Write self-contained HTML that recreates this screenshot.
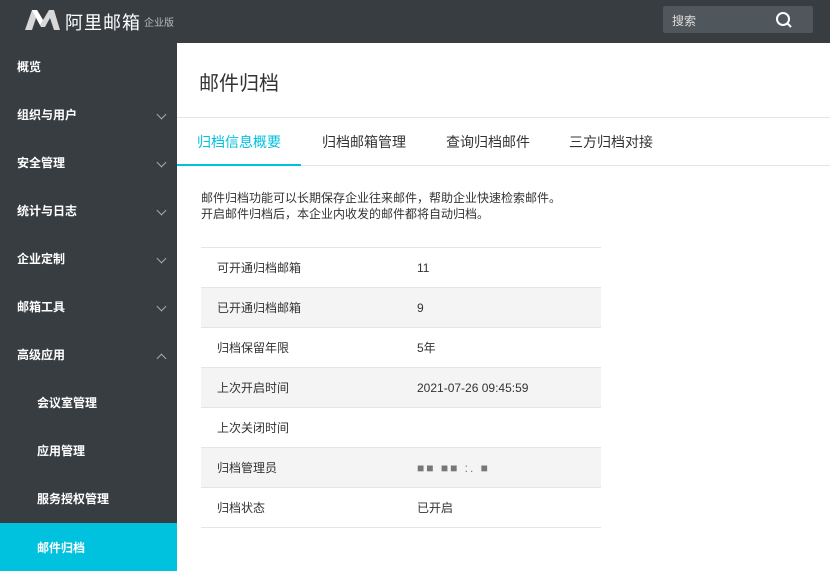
<!DOCTYPE html><html><head><meta charset="utf-8"><style>
*{margin:0;padding:0;box-sizing:border-box}
body{width:830px;height:559px;overflow:hidden;font-family:"Liberation Sans","Noto Sans CJK SC",sans-serif;background:#fff;position:relative}
.top{position:absolute;left:0;top:0;width:830px;height:43px;background:#373d41}
.side{position:absolute;left:0;top:43px;width:177px;height:516px;background:#373d41}
.it{height:48px;line-height:48px;color:#fff;font-size:12px;font-weight:bold;padding-left:17px;position:relative}
.it.sub{padding-left:37px}
.it.act{background:#00c1de}
.chev{position:absolute;right:12px;top:20px;width:7px;height:7px;border-right:1px solid #aaa;border-bottom:1px solid #aaa;transform:rotate(45deg)}
.chev.up{transform:rotate(-135deg);top:24px}
.main{position:absolute;left:177px;top:43px;width:653px;height:516px}
h1{position:absolute;left:22px;top:24px;font-size:20px;font-weight:normal;color:#333}
.tabs{position:absolute;left:0;top:74px;width:653px;height:49px;border-top:1px solid #e5e5e5;border-bottom:1px solid #e5e5e5}
.tab{position:absolute;top:0;height:48px;line-height:48px;font-size:14px;color:#333}
.tab.on{color:#00c1de;border-bottom:2px solid #00c1de;left:0;width:124px;text-align:center}
.desc{position:absolute;left:24px;top:147px;font-size:12px;line-height:16px;color:#333}
table{position:absolute;left:24px;top:204px;width:400px;border-collapse:collapse;font-size:12px;color:#333}
td{height:40px;border-top:1px solid #e5e5e5;border-bottom:1px solid #e5e5e5}
td:first-child{padding-left:16px;width:216px}
tr:nth-child(even) td{background:#f4f4f4}
</style></head><body>
<div class="top">
<svg style="position:absolute;left:25px;top:9px" width="35" height="22" viewBox="0 0 35 22"><path d="M0 21L7 1h5l6 10 6-10h5l6 20h-6l-4-12-5 9h-4l-5-9-4 12z" fill="#d8d8d8"/><path d="M7 1h5l6 10-3 5z" fill="#fff"/></svg>
<span style="position:absolute;left:65px;top:9px;color:#fff;font-size:18px;letter-spacing:1px">阿里邮箱</span>
<span style="position:absolute;left:144px;top:14px;color:#bbb;font-size:10px">企业版</span>
<div style="position:absolute;left:663px;top:6px;width:150px;height:27px;background:#4f565c;border-radius:2px"><span style="position:absolute;left:9px;top:6px;color:#ddd;font-size:12px">搜索</span>
<svg style="position:absolute;left:112px;top:5px" width="18" height="18" viewBox="0 0 18 18"><circle cx="8" cy="8" r="6" fill="none" stroke="#fff" stroke-width="2"/><path d="M12.5 12.5L16 16" stroke="#fff" stroke-width="2"/></svg></div>
</div>
<div class="side">
<div class="it">概览</div>
<div class="it">组织与用户<i class="chev"></i></div>
<div class="it">安全管理<i class="chev"></i></div>
<div class="it">统计与日志<i class="chev"></i></div>
<div class="it">企业定制<i class="chev"></i></div>
<div class="it">邮箱工具<i class="chev"></i></div>
<div class="it">高级应用<i class="chev up"></i></div>
<div class="it sub">会议室管理</div>
<div class="it sub">应用管理</div>
<div class="it sub">服务授权管理</div>
<div class="it sub act" style="line-height:46px;padding-top:2px">邮件归档</div>
</div>
<div class="main">
<h1>邮件归档</h1>
<div class="tabs">
<div class="tab on">归档信息概要</div>
<div class="tab" style="left:145px">归档邮箱管理</div>
<div class="tab" style="left:269px">查询归档邮件</div>
<div class="tab" style="left:392px">三方归档对接</div>
</div>
<div class="desc">邮件归档功能可以长期保存企业往来邮件，帮助企业快速检索邮件。<br>开启邮件归档后，本企业内收发的邮件都将自动归档。</div>
<table>
<tr><td>可开通归档邮箱</td><td>11</td></tr>
<tr><td>已开通归档邮箱</td><td>9</td></tr>
<tr><td>归档保留年限</td><td>5年</td></tr>
<tr><td>上次开启时间</td><td>2021-07-26 09:45:59</td></tr>
<tr><td>上次关闭时间</td><td></td></tr>
<tr><td>归档管理员</td><td><span style="color:#777;letter-spacing:2px">■■ ■■ :. ■</span></td></tr>
<tr><td>归档状态</td><td>已开启</td></tr>
</table>
</div>
</body></html>
